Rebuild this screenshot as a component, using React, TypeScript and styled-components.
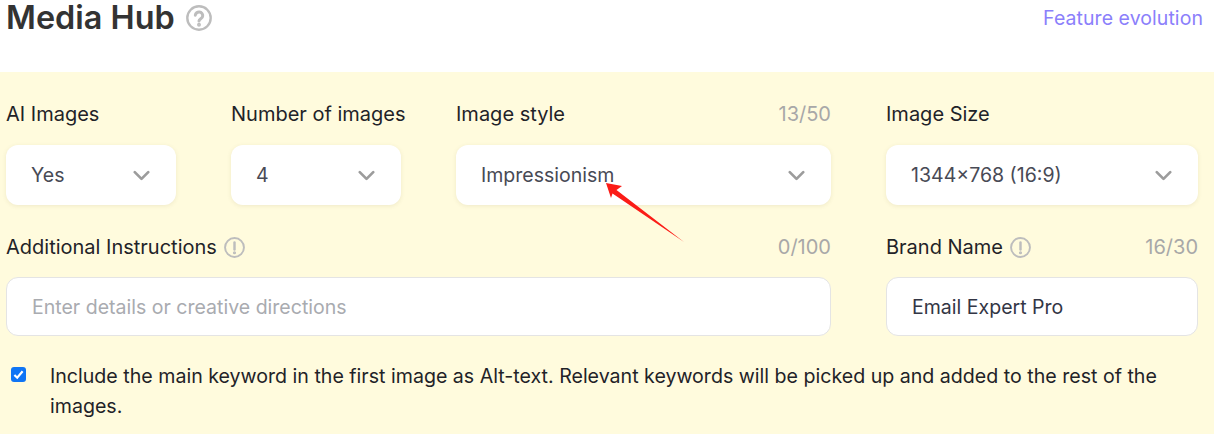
import styled, { createGlobalStyle } from "styled-components";
import { ChevronDown } from "lucide-react";

const GlobalStyle = createGlobalStyle`
  html, body {
    margin: 0;
    padding: 0;
    background: #fff;
    overflow: hidden;
  }
  * {
    box-sizing: border-box;
  }
`;

const Page = styled.div`
  width: 1214px;
  height: 434px;
  font-family: Inter, "Liberation Sans", sans-serif;
  color: #1f2328;
`;

const Header = styled.header`
  height: 72px;
  display: flex;
  justify-content: space-between;
  align-items: flex-start;
  padding: 0 11px 0 6px;
`;

const TitleRow = styled.div`
  display: flex;
  align-items: center;
  gap: 11px;
  height: 36px;
`;

const Title = styled.h1`
  margin: 0;
  font-size: 32.4px;
  line-height: 36px;
  font-weight: 600;
  color: #333;
`;

const EvolutionLink = styled.a`
  font-size: 19.5px;
  letter-spacing: 0.06px;
  line-height: 36px;
  color: #8b80fb;
  cursor: pointer;
`;

const Panel = styled.section`
  height: 362px;
  background: #fffbdd;
  padding: 29px 16px 0 6px;
`;

const Grid = styled.div`
  display: grid;
  grid-template-columns: 170px 170px 375px 312px;
  column-gap: 55px;
`;

const Field = styled.div<{ $span?: number }>`
  grid-column: span ${(p) => p.$span ?? 1};
  min-width: 0;
`;

const LabelRow = styled.div`
  height: 26px;
  display: flex;
  align-items: center;
  justify-content: space-between;
  white-space: nowrap;
`;

const LabelGroup = styled.div`
  display: flex;
  align-items: center;
  gap: 7px;
`;

const Label = styled.label`
  font-size: 20px;
  line-height: 26px;
  color: #1f2328;
`;

const Counter = styled.span`
  font-size: 20px;
  line-height: 26px;
  color: #a8a8a8;
`;

const Select = styled.div`
  height: 60px;
  margin-top: 18px;
  margin-bottom: 29px;
  padding: 0 25px;
  display: flex;
  align-items: center;
  justify-content: space-between;
  background: #fff;
  border-radius: 12px;
  box-shadow: 0 1px 4px rgba(120, 110, 60, 0.12);
  font-size: 19.55px;
  color: #484a55;
  svg {
    color: #9c9c9c;
    margin-right: -4px;
    flex-shrink: 0;
  }
`;

const TextBox = styled.div<{ $placeholder?: boolean }>`
  height: 59px;
  margin-top: 17px;
  padding: 0 25px;
  display: flex;
  align-items: center;
  background: #fff;
  border: 1px solid #e4e4e4;
  border-radius: 12px;
  font-size: 19.55px;
  color: ${(p) => (p.$placeholder ? "#a9abb0" : "#333645")};
`;

const ConsentRow = styled.div`
  display: flex;
  align-items: flex-start;
  gap: 24px;
  margin-top: 25px;
  padding-left: 5px;
`;

const CheckBox = styled.span`
  width: 15px;
  height: 15px;
  margin-top: 6px;
  flex-shrink: 0;
  display: flex;
  align-items: center;
  justify-content: center;
  background: #0f75f5;
  border-radius: 3px;
`;

const ConsentText = styled.p`
  margin: 0;
  width: 1130px;
  font-size: 19.6px;
  line-height: 30px;
  color: #1f2328;
`;

const Annotation = styled.svg`
  position: absolute;
  left: 0;
  top: 0;
  pointer-events: none;
`;

function HintIcon({ size, symbol }: { size: number; symbol: "?" | "!" }) {
  return (
    <svg width={size} height={size} viewBox="0 0 24 24" fill="none" stroke="#bdbdbd" strokeWidth="2.2" strokeLinecap="round" strokeLinejoin="round">
      <circle cx="12" cy="12" r="10.8" />
      {symbol === "?" ? (
        <>
          <path d="M8.6 9.4a3.4 3.4 0 0 1 6.8 .8c0 2.4-3.4 2.6-3.4 4.6" strokeWidth="2.8" />
          <circle cx="12" cy="18.2" r="0.7" fill="#bdbdbd" />
        </>
      ) : (
        <>
          <path d="M12 6.2v8" strokeWidth="2.8" />
          <circle cx="12" cy="18" r="0.7" fill="#bdbdbd" />
        </>
      )}
    </svg>
  );
}

function SelectBox({ value }: { value: string }) {
  return (
    <Select>
      <span>{value}</span>
      <ChevronDown size={27} strokeWidth={2.4} />
    </Select>
  );
}

export default function App() {
  return (
    <Page>
      <GlobalStyle />
      <Header>
        <TitleRow>
          <Title>Media Hub</Title>
          <HintIcon size={26} symbol="?" />
        </TitleRow>
        <EvolutionLink>Feature evolution</EvolutionLink>
      </Header>
      <Panel>
        <Grid>
          <Field>
            <LabelRow>
              <Label>AI Images</Label>
            </LabelRow>
            <SelectBox value="Yes" />
          </Field>
          <Field>
            <LabelRow>
              <Label>Number of images</Label>
            </LabelRow>
            <SelectBox value="4" />
          </Field>
          <Field>
            <LabelRow>
              <Label>Image style</Label>
              <Counter>13/50</Counter>
            </LabelRow>
            <SelectBox value="Impressionism" />
          </Field>
          <Field>
            <LabelRow>
              <Label>Image Size</Label>
            </LabelRow>
            <SelectBox value="1344×768 (16:9)" />
          </Field>
          <Field $span={3}>
            <LabelRow>
              <LabelGroup>
                <Label>Additional Instructions</Label>
                <HintIcon size={21} symbol="!" />
              </LabelGroup>
              <Counter>0/100</Counter>
            </LabelRow>
            <TextBox $placeholder>Enter details or creative directions</TextBox>
          </Field>
          <Field>
            <LabelRow>
              <LabelGroup>
                <Label>Brand Name</Label>
                <HintIcon size={21} symbol="!" />
              </LabelGroup>
              <Counter>16/30</Counter>
            </LabelRow>
            <TextBox>Email Expert Pro</TextBox>
          </Field>
        </Grid>
        <ConsentRow>
          <CheckBox>
            <svg width="11" height="11" viewBox="0 0 12 12" fill="none" stroke="#fff" strokeWidth="2.4">
              <path d="M1.5 6.5 4.6 9.5 10.5 2.5" />
            </svg>
          </CheckBox>
          <ConsentText>
            Include the main keyword in the first image as Alt-text. Relevant keywords will be picked up and added to the rest of the images.
          </ConsentText>
        </ConsentRow>
      </Panel>
      <Annotation width="1214" height="434" viewBox="0 0 1214 434">
        <path d="M606 183 L622 186 L616.5 190 L684 242 L612.5 193.5 L611 198 Z" fill="#fb1c17" />
      </Annotation>
    </Page>
  );
}
